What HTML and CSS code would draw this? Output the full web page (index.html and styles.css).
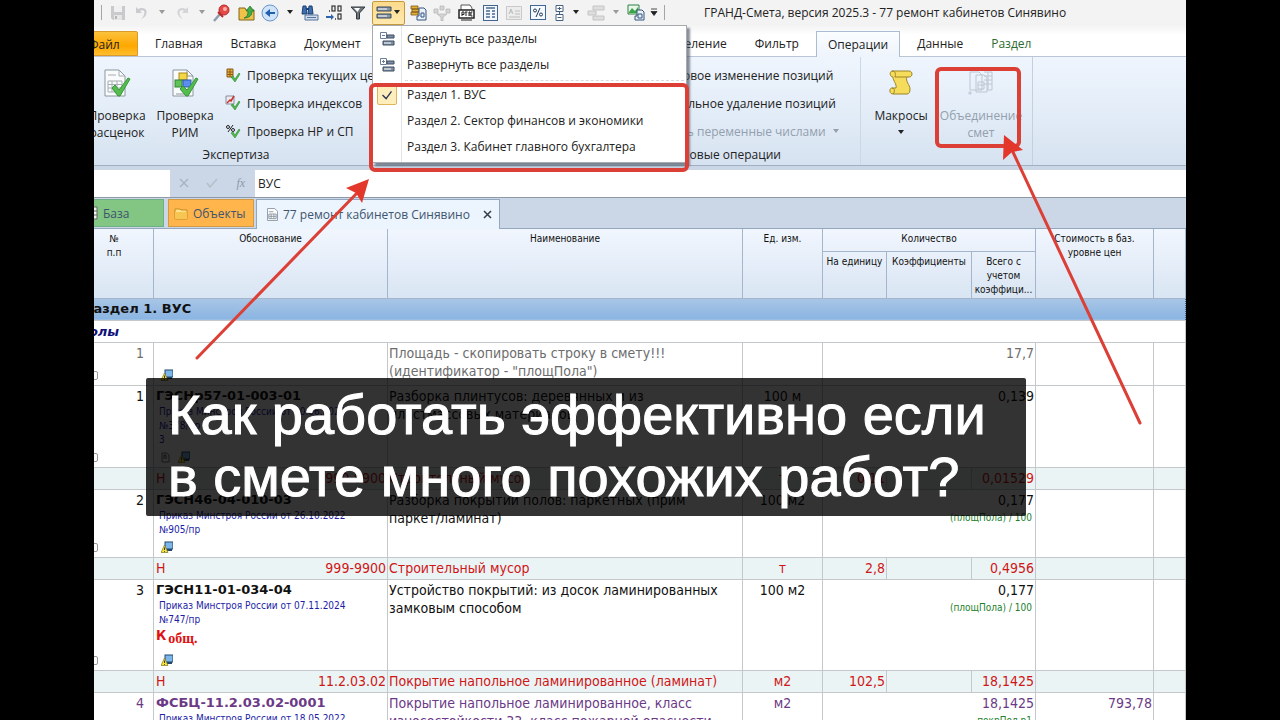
FILE: index.html
```html
<!DOCTYPE html>
<html lang="ru">

<head>
  <meta charset="UTF-8">
  <title>ГРАНД-Смета</title>
  <link rel="stylesheet" href="styles.css">
</head>

<body>
  <!-- общие значки -->
  <svg class="defs" width="0" height="0" aria-hidden="true">
    <symbol id="i-arrow" viewBox="0 0 8 5"><path d="M1 0h6L4 4z" fill="currentColor"/></symbol>
    <symbol id="i-warn" viewBox="0 0 12 12">
      <rect x="4" y="1" width="8" height="7" fill="#7cb6ea" stroke="#23486f"/>
      <path d="M6 8h5v2H6z" fill="#23486f"/>
      <path d="M3.500 4L7 11.500H0z" fill="#f7e53b" stroke="#7d7420" stroke-width=".7"/>
      <path d="M3.500 6.500v2.500M3.500 10v.8" stroke="#222" stroke-width=".9"/>
    </symbol>
    <symbol id="i-rows" viewBox="0 0 16 14">
      <path d="M1 1h14v4H1zM1 8h14v4H1z" fill="#8796a8" stroke="#39485a"/>
      <path d="M2 3h9M2 10h9" stroke="#fff"/>
    </symbol>
    <symbol id="i-sheet" viewBox="0 0 12 14">
      <path d="M.5.5h8l3 3v10H.5z" fill="#fff" stroke="#8b95a0"/>
      <path d="M2 4h5M2 6.500h8v5H2zM2 9h8M4.500 6.500v5M7.500 6.500v5" fill="none" stroke="#8b95a0"/>
    </symbol>
  </svg>

  <div class="stage">
    <div class="app">
      <div class="window">

        <!-- панель быстрого доступа -->
        <header class="titlebar">
          <div class="qat">
            <span class="sep first"></span>
            <button class="tool" aria-label="Сохранить"><svg width="16" height="16" viewBox="0 0 16 16"><path d="M1 1h14v14H3l-2-2z" fill="#c9cacc"/><path d="M4 1h8v6H4z" fill="#f0f0f0"/><path d="M4 10h8v5H4z" fill="#e6e6e6"/><path d="M5 11h2v3H5z" fill="#b5b6b8"/></svg></button>
            <button class="tool" aria-label="Отменить"><svg width="16" height="16" viewBox="0 0 16 16"><path d="M2 2v6h6L6 6c4-2 6 1 3 6l-2 2c7-2 8-12 0-11L4 4z" fill="#c9cbce"/></svg></button>
            <button class="drop dim" aria-label="Список отмены"><svg width="8" height="5"><use href="#i-arrow"/></svg></button>
            <button class="tool" aria-label="Вернуть"><svg width="16" height="16" viewBox="0 0 16 16"><path d="M14 2v6H8l2-2C6 4 4 7 7 12l2 2C2 12 1 2 9 3l3 1z" fill="#d3d5d8"/></svg></button>
            <button class="drop dim" aria-label="Список возврата"><svg width="8" height="5"><use href="#i-arrow"/></svg></button>
            <button class="tool" aria-label="Найти"><svg width="18" height="18" viewBox="0 0 18 18"><path d="M7 10l-6 7" stroke="#8e9bb0" stroke-width="2.500"/><circle cx="11" cy="6" r="5" fill="#e64a48" stroke="#b62a2a"/><circle cx="12" cy="5" r="2" fill="#f8b0a8"/><path d="M5 8l5 5" stroke="#b62a2a" stroke-width="2"/></svg></button>
            <button class="tool" aria-label="Открыть"><svg width="17" height="16" viewBox="0 0 17 16"><path d="M1 3h6l1 2h8v10H1z" fill="#f0c24a" stroke="#82661d"/><path d="M12 1l4 5h-2c0 5-3 7-8 7 3-1 4-3 4-7H8z" fill="#3fae49" stroke="#1d6b2b" stroke-width=".7"/></svg></button>
            <button class="tool" aria-label="Назад"><svg width="18" height="18" viewBox="0 0 18 18"><circle cx="9" cy="9" r="8" fill="#cfe4f8" stroke="#6b95c6"/><path d="M4 9l5-4v3h5v2H9v3z" fill="#1f5fae"/></svg></button>
            <button class="drop" aria-label="История"><svg width="8" height="5"><use href="#i-arrow"/></svg></button>
            <button class="tool" aria-label="Поиск"><svg width="18" height="16" viewBox="0 0 18 16"><path d="M2 1h3l1 8H1zM8 1h3l1 8H7z" fill="#3b6fb0" stroke="#1f3f70"/><path d="M5 4h3" stroke="#1f3f70" stroke-width="2"/><path d="M4 10h13v5H4z" fill="#cfdced" stroke="#56739a"/><path d="M6 12.500h9" stroke="#56739a"/></svg></button>
            <button class="tool" aria-label="Разрядность"><svg width="18" height="16" viewBox="0 0 18 16"><g fill="none" stroke="#333" stroke-width="1.200"><rect x="7" y="1" width="3" height="5"/><rect x="13" y="1" width="3" height="5"/><rect x="13" y="9" width="3" height="5"/></g><path d="M4 6h1M10 14h1" stroke="#333" stroke-width="1.500"/><path d="M1 11h5V9l3 3-3 3v-2H1z" fill="#2f62ad"/></svg></button>
            <button class="tool" aria-label="Фильтр"><svg width="16" height="14" viewBox="0 0 16 14"><path d="M1 1h14L9.500 7v6h-3V7z" fill="#6f777e" stroke="#33383d"/><path d="M4 2h6L7.500 6z" fill="#fff"/></svg></button>
            <div class="split">
              <button class="split-btn" aria-label="Разделы" aria-expanded="true"><svg width="16" height="14"><use href="#i-rows"/></svg><svg width="8" height="5"><use href="#i-arrow"/></svg></button>
              <div class="menu">
                <button class="menu-item"><svg width="15" height="14" viewBox="0 0 15 14"><path d="M.5.500h6v6h-6zM2 3.500h3" fill="#fff" stroke="#6b7f99"/><path d="M7 3h7v3H7zM3 9h11v4H3z" fill="#7f8fa3" stroke="#3d4d61"/><path d="M4 11h7" stroke="#fff"/></svg><span>Свернуть все разделы</span></button>
                <button class="menu-item"><svg width="15" height="14" viewBox="0 0 15 14"><path d="M.5.500h6v6h-6zM2 3.500h3M3.500 2v3" fill="#fff" stroke="#6b7f99"/><path d="M7 3h7v3H7zM3 9h11v4H3z" fill="#7f8fa3" stroke="#3d4d61"/><path d="M4 11h7" stroke="#fff"/></svg><span>Развернуть все разделы</span></button>
                <hr>
                <button class="menu-item checked"><svg width="20" height="20" viewBox="0 0 20 20"><path d="M5 10l4 4 6-8" fill="none" stroke="#2b3a55" stroke-width="1.500"/></svg><span>Раздел 1. ВУС</span></button>
                <button class="menu-item"><i></i><span>Раздел 2. Сектор финансов и экономики</span></button>
                <button class="menu-item"><i></i><span>Раздел 3. Кабинет главного бухгалтера</span></button>
              </div>
            </div>
            <button class="tool" aria-label="Индексы"><svg width="17" height="17" viewBox="0 0 17 17"><path d="M1 2h7v3H1zM2 5h7v3H2zM1 8h7v3H1z" fill="#e5ae3a" stroke="#7b5713" stroke-width=".8"/><path d="M9 4h5l2 2v10H7v-4h2z" fill="#eaf1f9" stroke="#35557f"/><path d="M11 9h3v4h-3z" fill="none" stroke="#35557f"/></svg></button>
            <button class="tool" aria-label="Отбор"><svg width="18" height="16" viewBox="0 0 18 16"><path d="M7 1h4v4H7zM1 4h4v4H1zM13 4h4v4h-4zM4 9h10l-4 3v4H8v-4z" fill="#d4d4d4" stroke="#b9b9b9" stroke-width=".8"/></svg></button>
            <button class="tool" aria-label="РТМС"><svg width="17" height="17" viewBox="0 0 17 17"><path d="M3 1h9l2 3v5H3z" fill="#fff" stroke="#555"/><rect x="1" y="6" width="15" height="8" fill="#fff" stroke="#222" stroke-width="1.500"/><path d="M4 12V8h2v2.500H4M8 8v4M7 8h2.500M11 12V8M11 8h1v4M14.500 8H13v4h1.500M3 16h11" fill="none" stroke="#222"/></svg></button>
            <button class="tool" aria-label="Документ"><svg width="15" height="16" viewBox="0 0 15 16"><rect x=".5" y=".5" width="14" height="15" fill="#f2f7fd" stroke="#41658f"/><path d="M3 3h9M3 6h4M9 6h3M3 9h4M9 9h3M3 12h4M9 12h3" stroke="#4c6b90" stroke-width="1.500"/></svg></button>
            <button class="tool" aria-label="Подпись"><svg width="16" height="14" viewBox="0 0 16 14"><path d="M.5.500h15v13H.5z" fill="#ececec" stroke="#c9c9c9"/><path d="M3 8l2-5 2 5M4 6h2M9 5h5M9 8h5M3 11h11" stroke="#bdbdbd" fill="none"/></svg></button>
            <button class="tool" aria-label="Проценты"><svg width="16" height="15" viewBox="0 0 16 15"><rect x=".5" y=".5" width="15" height="14" fill="#f5f9fe" stroke="#3f6698"/><g fill="none" stroke="#1f3556"><circle cx="5" cy="5.500" r="1.500"/><circle cx="11" cy="9.500" r="1.500"/><path d="M10 3l-4 9"/></g></svg></button>
            <button class="tool narrow" aria-label="Развернуть"><svg width="9" height="16" viewBox="0 0 9 16"><path d="M1 .5h7v6H1zM1 9.500h7v6H1zM2.500 3.500h4M4.500 2v3M2.500 12.500h4M4.500 6v3" fill="#fff" stroke="#44617f"/></svg></button>
            <button class="drop" aria-label="Уровни"><svg width="8" height="5"><use href="#i-arrow"/></svg></button>
            <button class="tool" aria-label="Структура"><svg width="18" height="16" viewBox="0 0 18 16"><path d="M6 1h11v4H6zM1 6h8v4H1zM6 11h11v4H6z" fill="#dedede" stroke="#c4c4c4"/></svg></button>
            <button class="drop dim" aria-label="Структура, список"><svg width="8" height="5"><use href="#i-arrow"/></svg></button>
            <button class="tool" aria-label="Выгрузка"><svg width="18" height="17" viewBox="0 0 18 17"><path d="M1 1h11v9H1z" fill="#eaf6ea" stroke="#2f8046"/><path d="M2 8l3-4 3 3 3-4v6H2z" fill="#38a548"/><path d="M10 6h5l2 2v8H8v-4h2z" fill="#eaf1f9" stroke="#35557f"/><path d="M11 10h4v4h-4z" fill="none" stroke="#35557f"/></svg></button>
            <button class="drop last" aria-label="Настройка панели"><svg width="8" height="9" viewBox="0 0 8 9"><path d="M1 1h6M1 3.500h6L4 7.500z" fill="#222" stroke="#222" stroke-width=".8"/></svg></button>
            <span class="sep"></span>
          </div>
          <div class="caption">ГРАНД-Смета, версия 2025.3 - 77 ремонт кабинетов Синявино</div>
        </header>

        <!-- вкладки ленты -->
        <nav class="tabs">
          <a class="tab file" href="#">Файл</a>
          <a class="tab" href="#">Главная</a>
          <a class="tab" href="#">Вставка</a>
          <a class="tab" href="#">Документ</a>
          <a class="tab selection" href="#">Выделение</a>
          <a class="tab" href="#">Фильтр</a>
          <a class="tab active" href="#">Операции</a>
          <a class="tab" href="#">Данные</a>
          <a class="tab green" href="#">Раздел</a>
        </nav>

        <!-- лента -->
        <section class="ribbon">
          <div class="group expert">
            <div class="group-body">
              <button class="big"><svg width="28" height="30" viewBox="0 0 28 30"><path d="M2 1h14l6 6v20H2z" fill="#fafbfc" stroke="#8d979f"/><path d="M16 1v6h6M5 6h8M5 12h14v11H5zM5 15.500h14M5 19h14M9 12v11M14 12v11" fill="none" stroke="#a5adb5"/><path d="M9 19l3-3 4 5 9-12 2 1-10 17h-2z" fill="#55bd4d" stroke="#35953a"/></svg>Проверка<br>расценок</button>
              <button class="big"><svg width="28" height="30" viewBox="0 0 28 30"><path d="M2 1h14l6 6v20H2z" fill="#fafbfc" stroke="#8d979f"/><path d="M16 1v6h6M5 25h10M12 10v3" fill="none" stroke="#8d979f"/><rect x="8" y="4" width="8" height="7" fill="#f6d743" stroke="#a88a1e"/><rect x="4" y="11" width="7" height="7" fill="#5fc35a" stroke="#2f8434"/><rect x="12" y="11" width="8" height="7" fill="#5a8ff0" stroke="#2a58ad"/><path d="M9 20l3-3 4 4 9-12 2 1-10 17h-2z" fill="#55bd4d" stroke="#35953a"/></svg>Проверка<br>РИМ</button>
              <div class="small-list">
                <button class="small"><svg width="16" height="16" viewBox="0 0 16 16"><path d="M2 2h6v8H2zM2 5h6M2 7.500h6M5 2v8" fill="#e8b13a" stroke="#8a5a16"/><path d="M6 10l2-1 2 3 4-6 1 1-5 8z" fill="#4fb848" stroke="#2f8c33" stroke-width=".6"/></svg>Проверка текущих цен</button>
                <button class="small"><svg width="16" height="16" viewBox="0 0 16 16"><path d="M1 1h8v8H1z" fill="#e9e9ee" stroke="#8b8f9d"/><path d="M2 8l3-3 1 1 3-5" fill="none" stroke="#c9302c" stroke-width="1.500"/><path d="M6 10l2-1 2 3 4-6 1 1-5 8z" fill="#4fb848" stroke="#2f8c33" stroke-width=".6"/></svg>Проверка индексов</button>
                <button class="small"><svg width="16" height="16" viewBox="0 0 16 16"><g fill="none" stroke="#222"><circle cx="3" cy="4" r="1.500"/><circle cx="8" cy="7" r="1.500"/><path d="M8 2L3 9"/></g><path d="M6 10l2-1 2 3 4-6 1 1-5 8z" fill="#4fb848" stroke="#2f8c33" stroke-width=".6"/></svg>Проверка НР и СП</button>
              </div>
            </div>
            <div class="group-title">Экспертиза</div>
          </div>
          <div class="group bulk">
            <div class="group-body">
              <div class="small-list">
                <button class="small">Массовое изменение позиций</button>
                <button class="small">Глобальное удаление позиций</button>
                <button class="small" disabled>Учесть переменные числами<svg width="8" height="5"><use href="#i-arrow"/></svg></button>
              </div>
            </div>
            <div class="group-title">Групповые операции</div>
          </div>
          <div class="group merge">
            <div class="group-body">
              <button class="big"><svg width="28" height="30" viewBox="0 0 28 30"><path d="M5 2h17c4 0 4 6 0 6h-2c-2 4 3 8 3 12 0 3-1 5-3 5H6c-4 0-4-6-1-6h4c1-4-3-7-3-11-3 0-4-5-1-6z" fill="#f6dc5c" stroke="#9b8424"/><path d="M5 2c3 0 4 2 3 6h12M5 19c3 0 3 4 1 6" fill="none" stroke="#9b8424"/></svg>Макросы<svg class="under" width="8" height="5"><use href="#i-arrow"/></svg></button>
              <button class="big" disabled><svg width="28" height="30" viewBox="0 0 28 30"><path d="M3 3h9l3 3v15H3zM9 6h8l3 3v14H9zM17 3h8v18h-5M17 7h8M17 11h8M17 15h8M21 3v18M11 13h6v7h-6zM11 16h6M1 24h4M3 22v4" fill="none" stroke="#bcc6d2"/></svg>Объединение<br>смет</button>
            </div>
          </div>
        </section>

        <!-- строка формул -->
        <div class="formula">
          <input class="name-box" type="text" aria-label="Имя">
          <div class="formula-tools">
            <button aria-label="Отмена"><svg width="10" height="10" viewBox="0 0 10 10"><path d="M1 1l8 8M9 1L1 9" stroke="#aab5c2" stroke-width="1.500"/></svg></button>
            <button aria-label="Ввод"><svg width="12" height="10" viewBox="0 0 12 10"><path d="M1 5l3 4 7-8" fill="none" stroke="#b5bfca" stroke-width="1.500"/></svg></button>
            <button class="fx" aria-label="Функция">fx</button>
          </div>
          <input class="formula-input" type="text" value="ВУС" aria-label="Формула">
        </div>

        <!-- вкладки документов -->
        <nav class="doc-tabs">
          <a class="doc base" href="#"><svg width="12" height="14" viewBox="0 0 12 14"><path d="M1 1h10v12H1zM1 5h10M1 9h10" fill="#f4f4f4" stroke="#666"/></svg>База</a>
          <a class="doc objects" href="#"><svg width="14" height="13" viewBox="0 0 14 13"><path d="M1 2h5l1 1h6v9H1z" fill="#ffe28a" stroke="#c58a1e"/><path d="M1 5h12v7H1z" fill="#f6c552"/></svg>Объекты</a>
          <div class="doc current"><svg width="11" height="13"><use href="#i-sheet"/></svg>77 ремонт кабинетов Синявино<button aria-label="Закрыть"><svg width="9" height="9" viewBox="0 0 9 9"><path d="M1 1l7 7M8 1L1 8" stroke="#333d4a" stroke-width="1.500"/></svg></button></div>
        </nav>

        <!-- таблица сметы -->
        <table class="estimate">
          <colgroup>
            <col class="c-num"><col class="c-code"><col class="c-name"><col class="c-unit"><col class="c-per"><col class="c-coef"><col class="c-total"><col class="c-cost"><col class="c-rest">
          </colgroup>
          <thead>
            <tr class="head-top">
              <th rowspan="2">№<br>п.п</th>
              <th rowspan="2">Обоснование</th>
              <th rowspan="2">Наименование</th>
              <th rowspan="2">Ед. изм.</th>
              <th colspan="3">Количество</th>
              <th rowspan="2">Стоимость в баз. уровне цен</th>
              <th rowspan="2"></th>
            </tr>
            <tr class="head-sub">
              <th>На единицу</th>
              <th>Коэффициенты</th>
              <th>Всего с учетом коэффици...</th>
            </tr>
          </thead>
          <tbody>
            <tr class="section"><td colspan="9">Раздел 1. ВУС</td></tr>
            <tr class="subsection"><td colspan="9">Полы</td></tr>
            <tr class="ghost">
              <td class="num">1<i class="clip"></i></td>
              <td><div class="marks alone"><svg width="12" height="12"><use href="#i-warn"/></svg></div></td>
              <td>Площадь - скопировать строку в смету!!!<br>(идентификатор - "площПола")</td>
              <td></td>
              <td class="val" colspan="3">17,7</td>
              <td></td><td></td>
            </tr>
            <tr>
              <td class="num">1<i class="clip"></i></td>
              <td><b class="code">ГЭСНр57-01-003-01</b><div class="order">Приказ Минстроя России от 10.06.2022<br>№378/пр<br>3</div><div class="marks"><svg width="9" height="12" viewBox="0 0 9 12"><path d="M1 2h5l2 2v7H1z" fill="#fff" stroke="#777"/><path d="M3 8V4h2v4" fill="none" stroke="#555"/></svg><svg width="12" height="12"><use href="#i-warn"/></svg></div></td>
              <td>Разборка плинтусов: деревянных и из<br>пластмассовых материалов</td>
              <td class="unit">100 м</td>
              <td class="val" colspan="3">0,139</td>
              <td></td><td></td>
            </tr>
            <tr class="res">
              <td></td>
              <td><div class="pair"><span>Н</span><span>999-9900</span></div></td>
              <td>Строительный мусор</td>
              <td class="unit">т</td>
              <td class="val">0,11</td><td></td><td class="val">0,01529</td>
              <td></td><td></td>
            </tr>
            <tr>
              <td class="num">2<i class="clip"></i></td>
              <td><b class="code">ГЭСН46-04-010-03</b><div class="order">Приказ Минстроя России от 26.10.2022<br>№905/пр</div><div class="marks"><svg width="12" height="12"><use href="#i-warn"/></svg></div></td>
              <td>Разборка покрытий полов: паркетных (прим<br>паркет/ламинат)</td>
              <td class="unit">100 м2</td>
              <td class="val" colspan="3">0,177<div class="expr">(площПола) / 100</div></td>
              <td></td><td></td>
            </tr>
            <tr class="res">
              <td></td>
              <td><div class="pair"><span>Н</span><span>999-9900</span></div></td>
              <td>Строительный мусор</td>
              <td class="unit">т</td>
              <td class="val">2,8</td><td></td><td class="val">0,4956</td>
              <td></td><td></td>
            </tr>
            <tr>
              <td class="num">3<i class="clip"></i></td>
              <td><b class="code">ГЭСН11-01-034-04</b><div class="order">Приказ Минстроя России от 07.11.2024<br>№747/пр</div><div class="coef">К<sub>общ.</sub></div><div class="marks"><svg width="12" height="12"><use href="#i-warn"/></svg></div></td>
              <td>Устройство покрытий: из досок ламинированных<br>замковым способом</td>
              <td class="unit">100 м2</td>
              <td class="val" colspan="3">0,177<div class="expr">(площПола) / 100</div></td>
              <td></td><td></td>
            </tr>
            <tr class="res">
              <td></td>
              <td><div class="pair"><span>Н</span><span>11.2.03.02</span></div></td>
              <td>Покрытие напольное ламинированное (ламинат)</td>
              <td class="unit">м2</td>
              <td class="val">102,5</td><td></td><td class="val">18,1425</td>
              <td></td><td></td>
            </tr>
            <tr class="material">
              <td class="num">4</td>
              <td><b class="code">ФСБЦ-11.2.03.02-0001</b><div class="order">Приказ Минстроя России от 18.05.2022</div></td>
              <td>Покрытие напольное ламинированное, класс<br>износостойкости 33, класс пожарной опасности КМ3</td>
              <td class="unit">м2</td>
              <td class="val" colspan="3">18,1425<div class="expr">покрПол.р1</div></td>
              <td class="val">793,78</td><td></td>
            </tr>
          </tbody>
        </table>
      </div>
    </div>

    <!-- надпись и стрелки поверх окна -->
    <h1 class="banner">Как работать эффективно если<br>в смете много похожих работ?</h1>
    <svg class="marker" width="1280" height="720" viewBox="0 0 1280 720" aria-hidden="true">
      <g fill="none" stroke="#dc3f35" stroke-width="4" stroke-linecap="round">
        <rect x="371" y="85" width="316" height="85" rx="4"/>
        <rect x="937" y="69" width="82" height="77" rx="4"/>
        <path d="M197 358L358 192M1140 423L1012 150" stroke-width="3"/>
      </g>
      <path d="M369 179L346 188l10 5 6 10zM1004 135l-1 25 9-8 11-2z" fill="#e3372c"/>
    </svg>
  </div>
</body>

</html>
```
FILE: styles.css
```css
* {
  box-sizing: border-box;
}

body {
  margin: 0;
  background: #000;
  font-family: "Open Sans", "Noto Sans", sans-serif;
  font-size: 12px;
  color: #222;
}

button,
input {
  font: inherit;
  color: inherit;
  border: 0;
  padding: 0;
  margin: 0;
  background: none;
}

a {
  color: inherit;
  text-decoration: none;
}

.defs {
  position: absolute;
}

.stage {
  position: relative;
  height: 100vh;
  padding: 0 94px;
  overflow: hidden;
}

.app {
  height: 100%;
  overflow: hidden;
  background: #fff;
}

/* окно уходит за левый край кадра */
.window {
  margin-left: -20px;
}

/* ---------- заголовок ---------- */
.titlebar {
  display: flex;
  align-items: center;
  height: 25px;
  background: #f3f3f3;
  white-space: nowrap;
}

.qat {
  display: flex;
  align-items: center;
  padding-left: 27px;
}

.sep {
  width: 1px;
  height: 15px;
  margin: 0 4px;
  background: #a5a5a5;
}

.sep.first {
  margin-left: 0;
}

.tool {
  display: flex;
  align-items: center;
  justify-content: center;
  width: 24px;
  height: 24px;
}

.tool.narrow {
  width: 18px;
}

.drop {
  display: flex;
  align-items: center;
  justify-content: center;
  width: 16px;
  height: 24px;
}

.drop.last {
  width: 12px;
}

.dim {
  color: #9a9a9a;
}

.split {
  position: relative;
  margin: 0 1px 0 2px;
}

.split-btn {
  display: flex;
  align-items: center;
  justify-content: space-between;
  width: 33px;
  height: 24px;
  padding: 0 3px;
  border: 1px solid #c69a3c;
  border-radius: 2px;
  background: linear-gradient(#fbdb8c, #ffe9ae);
}

.caption {
  margin-left: 35px;
  font-size: 12px;
}

/* ---------- меню разделов ---------- */
.menu {
  position: absolute;
  top: 24px;
  left: 0;
  z-index: 2;
  width: 315px;
  padding: 0 2px 2px;
  border: 1px solid #a7abb0;
  background: linear-gradient(90deg, #fff 28px, #e2e4e7 28px, #e2e4e7 29px, #fff 29px);
  box-shadow: 3px 3px 2px rgba(60, 70, 85, .6);
}

.menu hr {
  height: 1px;
  margin: 2px 0 1px 30px;
  border: 0;
  border-top: 1px dashed #d8dadd;
}

.menu-item {
  display: grid;
  grid-template-columns: 24px 1fr;
  align-items: center;
  justify-items: center;
  column-gap: 8px;
  width: 100%;
  height: 26px;
  text-align: left;
}

.menu-item span {
  justify-self: start;
}

.menu-item.checked svg {
  border: 1px solid #e0b45a;
  border-radius: 2px;
  background: #fdeebb;
}

/* ---------- вкладки ленты ---------- */
.tabs {
  display: flex;
  align-items: flex-end;
  height: 32px;
  padding-top: 6px;
  background: linear-gradient(#f3f3f3, #fff 10px);
  border-bottom: 1px solid #b9c6d6;
}

.tab {
  height: 25px;
  padding: 0 14px;
  line-height: 25px;
}

.tab.file {
  width: 64px;
  margin-right: 3px;
  border: 1px solid #d99a2b;
  border-radius: 2px 2px 0 0;
  background: linear-gradient(#fbc13c, #ffa800 60%, #ffbd2e);
}

.tab.selection {
  margin-left: 272px;
}

.tab.active {
  height: 26px;
  padding: 0 11px;
  border: 1px solid #a9bcd2;
  border-bottom: 0;
  background: linear-gradient(#fbfdff, #eef4fc);
  margin: 0 3px -1px;
}

.tab.green {
  color: #2c6b2f;
}

/* ---------- лента ---------- */
.ribbon {
  display: flex;
  height: 109px;
  background: linear-gradient(#eff5fd, #e3edf8 50%, #d6e2f0);
  border-bottom: 1px solid #9fb0c4;
  font-size: 12px;
}

.group {
  display: flex;
  flex-direction: column;
  white-space: nowrap;
}

.group-body {
  display: flex;
  flex: 1;
  padding-top: 4px;
}

.group-title {
  height: 20px;
  line-height: 20px;
  font-size: 12px;
  text-align: center;
}

.expert {
  width: 324px;
}

.bulk {
  width: 284px;
  margin-left: 178px;
}

.bulk .small-list {
  margin-left: 78px;
}

.merge {
  border-left: 1px solid #ccd8e6;
  border-right: 1px solid #c3d0df;
  padding: 0 6px 0 8px;
}

.big {
  display: flex;
  flex-direction: column;
  align-items: center;
  width: 68px;
  padding-top: 8px;
  line-height: 17px;
  text-align: center;
}

.expert .big:first-child {
  margin-left: 9px;
}

.big svg:first-child {
  margin-bottom: 8px;
}

.merge .big {
  width: 64px;
}

.merge .big + .big {
  width: 90px;
  margin-left: 3px;
}

.under {
  margin-top: 6px;
}

.big:disabled,
.small:disabled {
  color: #939fad;
}

.small-list {
  display: flex;
  flex-direction: column;
  margin-left: 6px;
}

.small {
  display: flex;
  align-items: center;
  gap: 6px;
  height: 28px;
}

/* ---------- строка формул ---------- */
.formula {
  display: flex;
  height: 32px;
  padding-top: 4px;
  background: #cbd7e6;
  border-bottom: 1px solid #8e9aa8;
}

.name-box {
  width: 96px;
  background: #fff;
}

.formula-tools {
  display: flex;
  width: 85px;
}

.formula-tools button {
  flex: 1;
}

.formula-tools .fx {
  font-family: "Liberation Serif", serif;
  font-style: italic;
  color: #8c98a6;
}

.formula-input {
  flex: 1;
  padding-left: 3px;
  background: #fff;
}

/* ---------- вкладки документов ---------- */
.doc-tabs {
  display: flex;
  height: 31px;
  padding-top: 1px;
  background: #cbd7e6;
  border-bottom: 1px solid #93a8bf;
  color: #40546e;
}

.doc {
  display: flex;
  align-items: center;
  gap: 5px;
  height: 28px;
  padding: 0 7px;
  white-space: nowrap;
}

.base {
  width: 90px;
  padding-left: 11px;
  margin-right: 4px;
  border: 1px solid #6faf85;
  background: #83c583;
}

.objects {
  width: 86px;
  padding: 0 5px;
  border: 1px solid #d39a45;
  background: #ffb54c;
}

.current {
  width: 244px;
  height: 30px;
  margin-left: 2px;
  padding-left: 10px;
  border: 1px solid #93a8bf;
  border-bottom: 0;
  background: #ecf4fd;
}

.current button {
  margin-left: auto;
}

/* ---------- таблица ---------- */
.estimate {
  width: 100%;
  table-layout: fixed;
  border-collapse: collapse;
  font-family: "DejaVu Sans Condensed", "DejaVu Sans", sans-serif;
  font-size: 14px;
  line-height: 18px;
  color: #111;
}

.c-num { width: 79px; }
.c-code { width: 234px; }
.c-unit { width: 80px; }
.c-per { width: 64px; }
.c-coef { width: 85px; }
.c-total { width: 64px; }
.c-cost { width: 118px; }
.c-rest { width: 32px; }

.estimate th {
  padding: 3px 1px 0;
  border: 1px solid #a3b6cb;
  border-top: 0;
  vertical-align: top;
  font-size: 10px;
  font-weight: normal;
  line-height: 14px;
  overflow: hidden;
}

.estimate thead {
  background: linear-gradient(#f1f6fe, #d9e5f3);
}

.head-top {
  height: 22px;
}

.head-sub {
  height: 47px;
}

.estimate td {
  padding: 1px 1px 3px;
  border: 1px solid #c4c8ca;
  vertical-align: top;
}

.estimate .section td,
.estimate .subsection td {
  height: 22px;
  font-family: "DejaVu Sans", sans-serif;
  font-size: 13px;
  font-weight: bold;
}

.estimate .section td {
  padding: 1px 0 0 9px;
  border: 1px dotted #4d6079;
  background: linear-gradient(#a9c6e6, #8ab4e2);
}

.estimate .subsection td {
  padding: 2px 0 0 3px;
  font-style: italic;
  color: #10107a;
}

.estimate .num {
  position: relative;
  padding-right: 9px;
  text-align: right;
}

.clip {
  position: absolute;
  left: 14px;
  bottom: 5px;
  width: 9px;
  height: 9px;
  border: 1px solid #9a9a9a;
  border-radius: 2px;
}

.code {
  display: block;
  padding-left: 1px;
  font-family: "DejaVu Sans", sans-serif;
  font-size: 13px;
  line-height: 18px;
}

.order {
  padding-left: 4px;
  font-size: 10px;
  line-height: 14px;
  color: #1d1da8;
}

.coef {
  height: 23px;
  padding-left: 1px;
  font-weight: bold;
  line-height: 16px;
  color: #e01010;
}

.coef sub {
  margin-left: 2px;
  font-family: "Liberation Serif", serif;
  font-size: 14px;
}

.marks {
  display: flex;
  align-items: center;
  gap: 8px;
  height: 14px;
  margin-top: 3px;
  padding-left: 6px;
}

.marks.alone {
  margin-top: 24px;
}

.unit {
  text-align: center;
}

.val {
  text-align: right;
}

.expr {
  padding-right: 2px;
  font-size: 10px;
  color: #22802a;
}

.ghost {
  color: #6d6d6d;
}

.estimate .res td {
  padding: 1px 1px 2px;
}

.res {
  background: #ebf4f5;
  color: #cf1717;
}

.pair {
  display: flex;
  justify-content: space-between;
  padding-left: 1px;
}

.material {
  color: #6b3a86;
}

/* ---------- поверх окна ---------- */
.banner {
  position: absolute;
  top: 378px;
  left: 146px;
  margin: 0;
  padding: 6px 40px 8px 22px;
  border-radius: 2px;
  background: rgba(0, 0, 0, .8);
  font-family: "Liberation Sans", Arial, sans-serif;
  font-size: 56px;
  font-weight: normal;
  line-height: 62px;
  white-space: nowrap;
  color: #fff;
  -webkit-text-stroke: 1px #fff;
}

.marker {
  position: absolute;
  top: 0;
  left: 0;
  z-index: 3;
}
```
